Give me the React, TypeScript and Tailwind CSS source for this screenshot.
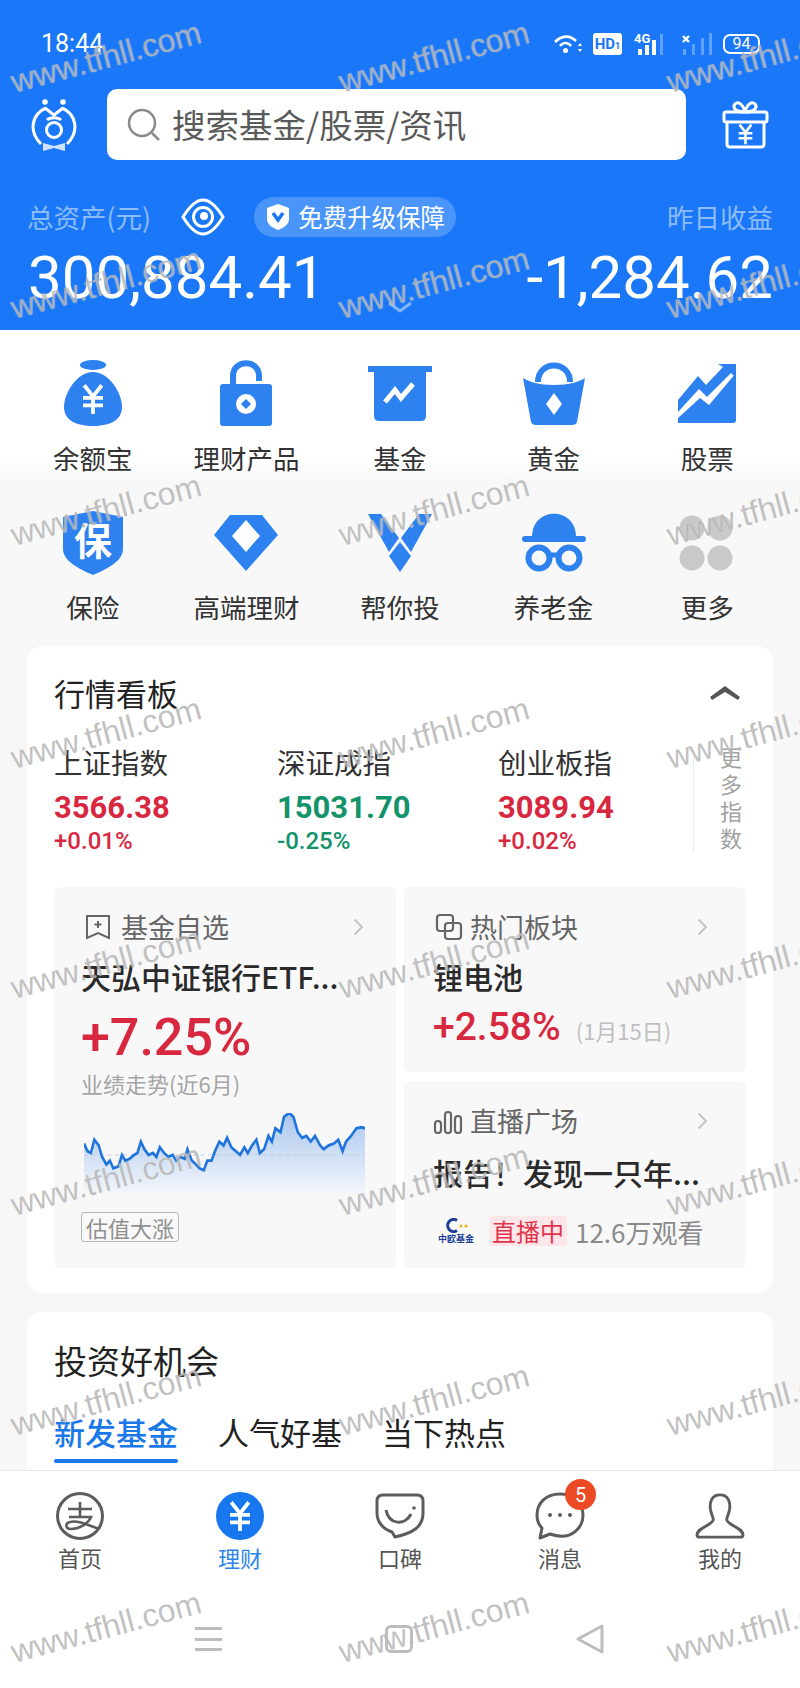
import type { ReactNode } from "react";

const CJK = "font-['Noto_Sans_CJK_SC','Noto_Sans',sans-serif]";
const NUM = "font-['Roboto','Noto_Sans_CJK_SC',sans-serif]";
const BLUE = "#2d82f0";

const Yen = ({ x, y, s = 1, color = "#fff" }: { x: number; y: number; s?: number; color?: string }) => (
  <g transform={`translate(${x} ${y}) scale(${s})`} stroke={color} strokeWidth="3" fill="none">
    <path d="M-7 -11 L0 -2 L7 -11 M-8 -1 H8 M-8 5 H8 M0 -2 V12" />
  </g>
);

const topIcons: { label: string; icon: ReactNode }[] = [
  {
    label: "余额宝",
    icon: (
      <svg width="64" height="70" viewBox="0 0 64 70">
        <ellipse cx="32" cy="6" rx="13" ry="5" fill={BLUE} />
        <path d="M32 13 C16 13 3 34 3 48 C3 61 15 67 32 67 C49 67 61 61 61 48 C61 34 48 13 32 13Z" fill={BLUE} />
        <Yen x={32} y={40} s={1.25} />
      </svg>
    ),
  },
  {
    label: "理财产品",
    icon: (
      <svg width="56" height="68" viewBox="0 0 56 68">
        <path d="M15 24 V16 C15 -1 41 -1 41 16 V21" fill="none" stroke={BLUE} strokeWidth="6" />
        <rect x="2" y="24" width="52" height="42" rx="3" fill={BLUE} />
        <circle cx="28" cy="44" r="10" fill="#fff" />
        <path d="M28 39 L33 44 L28 49 L23 44Z" fill={BLUE} />
      </svg>
    ),
  },
  {
    label: "基金",
    icon: (
      <svg width="64" height="56" viewBox="0 0 64 56">
        <rect x="0" y="0" width="64" height="6" fill={BLUE} />
        <path d="M6 4 H58 V50 Q58 55 53 55 H11 Q6 55 6 50Z" fill={BLUE} />
        <path d="M17 36 L27 24 L33 32 L45 18" fill="none" stroke="#fff" strokeWidth="5" />
      </svg>
    ),
  },
  {
    label: "黄金",
    icon: (
      <svg width="64" height="64" viewBox="0 0 64 64">
        <path d="M16 20 C16 -2 48 -2 48 20" fill="none" stroke={BLUE} strokeWidth="6" />
        <path d="M1 16 C8 20 16 23 32 23 C48 23 56 20 63 16 L55 60 Q54 63 50 63 H14 Q10 63 9 60Z" fill={BLUE} />
        <path d="M32 31 L40 42 L32 53 L24 42Z" fill="#fff" />
      </svg>
    ),
  },
  {
    label: "股票",
    icon: (
      <svg width="60" height="60" viewBox="0 0 60 60">
        <path d="M59 9 V56 Q59 59 56 59 H1 V54 L23 34 L32 41 Z" fill={BLUE} />
        <path d="M1 36 L21 12 L29 21 L46 3 L41 0 H59 V14 L54 9 L30 33 L22 25 L1 48Z" fill={BLUE} />
      </svg>
    ),
  },
  {
    label: "保险",
    icon: (
      <svg width="60" height="64" viewBox="0 0 60 64">
        <path d="M30 0 L60 6 V38 C60 50 44 58 30 64 C16 58 0 50 0 38 V6Z" fill={BLUE} />
        <text x="30" y="44" textAnchor="middle" fill="#fff" fontSize="38" fontWeight="700" fontFamily="Noto Sans CJK SC">保</text>
      </svg>
    ),
  },
  {
    label: "高端理财",
    icon: (
      <svg width="64" height="56" viewBox="0 0 64 56">
        <path d="M16 0 H48 L64 20 L32 56 L0 20Z" fill={BLUE} />
        <path d="M32 5 L46 21 L32 37 L18 21Z" fill="#fff" />
      </svg>
    ),
  },
  {
    label: "帮你投",
    icon: (
      <svg width="64" height="58" viewBox="0 0 64 58">
        <path d="M0 0 H13 L31 24 L21 38Z" fill={BLUE} />
        <path d="M64 0 H51 L33 24 L43 38Z" fill={BLUE} />
        <path d="M32 28 L43 42 L32 58 L21 42Z" fill={BLUE} />
      </svg>
    ),
  },
  {
    label: "养老金",
    icon: (
      <svg width="64" height="60" viewBox="0 0 64 60">
        <path d="M10 24 C10 -7 54 -7 54 24Z" fill={BLUE} />
        <rect x="0" y="23" width="64" height="6" rx="3" fill={BLUE} />
        <circle cx="17" cy="45" r="10.5" fill="none" stroke={BLUE} strokeWidth="6" />
        <circle cx="47" cy="45" r="10.5" fill="none" stroke={BLUE} strokeWidth="6" />
        <path d="M26 42 H38" stroke={BLUE} strokeWidth="5" />
      </svg>
    ),
  },
  {
    label: "更多",
    icon: (
      <svg width="56" height="56" viewBox="0 0 56 56" fill="#c9c9c9">
        <circle cx="13" cy="13" r="12.5" />
        <circle cx="41" cy="13" r="12.5" />
        <circle cx="13" cy="43" r="12.5" />
        <circle cx="41" cy="43" r="12.5" />
      </svg>
    ),
  },
];

const indexes = [
  { name: "上证指数", value: "3566.38", pct: "+0.01%", color: "text-[#d8283f]" },
  { name: "深证成指", value: "15031.70", pct: "-0.25%", color: "text-[#12936a]" },
  { name: "创业板指", value: "3089.94", pct: "+0.02%", color: "text-[#d8283f]" },
];

const chartPts =
  "0,32 4,40 8,42 12,28 17,34 21,46 26,54 30,50 34,58 40,56 44,44 48,50 53,48 58,44 62,42 66,30 70,38 75,44 80,42 84,46 88,36 93,42 98,46 103,44 107,50 112,46 117,48 120,38 125,50 130,54 134,58 139,60 143,50 148,50 152,40 157,30 162,34 166,26 171,36 176,40 181,44 186,36 190,42 195,34 200,28 204,42 209,38 214,24 218,30 222,16 228,20 232,4 238,0 243,4 248,20 253,26 258,24 263,30 268,24 274,34 278,38 284,34 290,32 295,28 300,40 304,30 310,24 316,16 322,15 326,16";

const watermarkRows = [57, 283, 510, 733, 963, 1180, 1400, 1627];
const watermarkCols = [106, 434, 762];

const Chevron = () => (
  <svg width="11" height="18" viewBox="0 0 11 18" fill="none" stroke="#c4c4c4" strokeWidth="2">
    <path d="M1.5 1.5 L9 9 L1.5 16.5" />
  </svg>
);

const navItems: { label: string; active?: boolean; icon: ReactNode }[] = [
  {
    label: "首页",
    icon: (
      <svg width="50" height="50" viewBox="0 0 50 50" fill="none" stroke="#5c5c5c" strokeWidth="3">
        <circle cx="25" cy="25" r="22.5" />
        <path d="M13 18 H37 M25 11 V27 M14 26 H36 C33 33 24 38 16 38 C10 38 10 32 15 31 C23 29 33 34 44 38" strokeWidth="2.6" />
      </svg>
    ),
  },
  {
    label: "理财",
    active: true,
    icon: (
      <svg width="48" height="48" viewBox="0 0 48 48">
        <circle cx="24" cy="24" r="24" fill="#1677ef" />
        <Yen x={24} y={24} s={1.25} />
      </svg>
    ),
  },
  {
    label: "口碑",
    icon: (
      <svg width="50" height="46" viewBox="0 0 50 46" fill="none" stroke="#5c5c5c" strokeWidth="3">
        <path d="M8 2 H42 Q48 2 48 8 V20 C48 34 38 40 20 44 L17 39 C8 36 2 29 2 20 V8 Q2 2 8 2Z" strokeLinejoin="round" />
        <path d="M11 17 C14 32 30 33 36 21" />
        <circle cx="39" cy="15" r="1.8" fill="#5c5c5c" stroke="none" />
      </svg>
    ),
  },
  {
    label: "消息",
    icon: (
      <svg width="50" height="48" viewBox="0 0 50 48" fill="none" stroke="#5c5c5c" strokeWidth="3">
        <path d="M25 2 C10 2 2 12 2 23 C2 29 4 33 7 36 L5 46 L15 42 C38 50 48 34 48 23 C48 12 40 2 25 2Z" strokeLinejoin="round" />
        <circle cx="15" cy="23" r="2" fill="#5c5c5c" stroke="none" />
        <circle cx="25" cy="23" r="2" fill="#5c5c5c" stroke="none" />
        <circle cx="35" cy="23" r="2" fill="#5c5c5c" stroke="none" />
      </svg>
    ),
  },
  {
    label: "我的",
    icon: (
      <svg width="52" height="46" viewBox="0 0 52 48" fill="none" stroke="#5c5c5c" strokeWidth="3">
        <path d="M26 2 C17 2 15 10 16 17 C17 23 19 25 19 28 C19 33 2 36 2 44 Q2 46 5 46 H47 Q50 46 50 44 C50 36 33 33 33 28 C33 25 35 23 36 17 C37 10 35 2 26 2Z" />
      </svg>
    ),
  },
];

export default function App() {
  return (
    <div className={`relative flex h-[1688px] w-[800px] flex-col overflow-hidden bg-[#f7f7f8] ${CJK}`}>
      {/* Header */}
      <header className="flex h-[330px] shrink-0 flex-col bg-[#1a78f8] text-white">
        <div className="flex h-[89px] items-center justify-between pb-[1px] pl-[41px] pr-[40px]">
          <span className={`text-[25px] ${NUM}`}>18:44</span>
          <div className="flex items-center">
            <svg width="29" height="20" viewBox="0 0 29 20" fill="none" stroke="#fff" strokeWidth="2.6">
              <path d="M1 8 C8 1 16 1 22 7 M6 12 C9 8 14 8 17 12" />
              <circle cx="11.5" cy="16.5" r="2.5" fill="#fff" stroke="none" />
              <path d="M26 9 L28 12 H24Z M26 18 L28 15 H24Z" fill="#fff" stroke="none" />
            </svg>
            <span className={`ml-[10px] flex h-[22px] w-[29px] items-baseline justify-center rounded-[3px] bg-white text-[15px] font-bold leading-[22px] text-[#1a78f8] ${NUM}`}>
              HD<span className="text-[9px]">1</span>
            </span>
            <svg width="32" height="24" viewBox="0 0 32 24" fill="#fff" className="ml-[12px]">
              <text x="0" y="11" fontSize="13" fontWeight="700" fontFamily="Roboto">4G</text>
              <rect x="4" y="17" width="4" height="6" />
              <rect x="11" y="13" width="4" height="10" />
              <rect x="18" y="8" width="4" height="15" />
              <rect x="26" y="2" width="3" height="21" opacity="0.3" />
            </svg>
            <svg width="31" height="24" viewBox="0 0 31 24" fill="#fff" className="ml-[16px]">
              <path d="M1 4 L7 10 M7 4 L1 10" stroke="#fff" strokeWidth="2.4" />
              <rect x="1" y="17" width="3" height="6" opacity="0.3" />
              <rect x="10" y="12" width="3" height="11" opacity="0.3" />
              <rect x="19" y="6" width="3" height="17" opacity="0.3" />
              <rect x="27" y="1" width="3" height="22" opacity="0.3" />
            </svg>
            <span className={`ml-[10px] flex h-[20px] w-[37px] items-center justify-center rounded-[7px] border-2 border-white text-[16px] leading-none ${NUM}`}>
              94
            </span>
          </div>
        </div>

        <div className="flex h-[71px] items-center pl-[30px] pr-[31px]">
          <svg width="48" height="56" viewBox="0 0 48 56" fill="none" stroke="#fff" strokeWidth="3" className="shrink-0">
            <path d="M11 47 C-2 34 2 17 16 11 M37 47 C50 34 46 17 32 11" />
            <path d="M15 11 L24 18 L33 11" />
            <circle cx="15" cy="5" r="2.8" fill="#fff" stroke="none" />
            <circle cx="33" cy="5" r="2.8" fill="#fff" stroke="none" />
            <path d="M17 23 C20 20 28 20 31 23" />
            <circle cx="24" cy="33" r="7.5" />
            <path d="M13 46 L24 49 L35 46 V54 L24 51 L13 54Z" fill="#cfe2fd" stroke="none" />
          </svg>
          <div className="ml-[29px] flex h-[71px] w-[579px] items-center rounded-[10px] bg-white pl-[20px]">
            <svg width="34" height="34" viewBox="0 0 34 34" fill="none" stroke="#8a8a8a" strokeWidth="2.5">
              <circle cx="15" cy="15" r="13" />
              <path d="M25 25 L32 32" />
            </svg>
            <span className="ml-[11px] text-[33.5px] text-[#5a5a5a]">搜索基金/股票/资讯</span>
          </div>
          <svg width="47" height="48" viewBox="0 0 47 48" fill="none" stroke="#fff" strokeWidth="3" className="ml-auto shrink-0">
            <rect x="2" y="11" width="43" height="10" rx="2" />
            <path d="M5 21 V43 Q5 46 8 46 H39 Q42 46 42 43 V21" />
            <path d="M23 11 C14 11 10 7 13 3 C16 0 21 3 23 11 C25 3 30 0 33 3 C36 7 32 11 23 11" />
            <Yen x={23.5} y={33} s={0.85} />
          </svg>
        </div>

        <div className="mt-[37px] flex h-[40px] items-center pl-[27px] pr-[27px]">
          <span className="text-[26.5px] text-[#8cbcfb]">总资产(元)</span>
          <svg width="44" height="38" viewBox="0 0 44 38" fill="none" stroke="#fff" strokeWidth="3" className="ml-[30px]">
            <path d="M2 19 C10 6 16 2 22 2 C28 2 34 6 42 19 C34 32 28 36 22 36 C16 36 10 32 2 19Z" />
            <circle cx="22" cy="19" r="9.5" />
            <circle cx="23" cy="18" r="4" fill="#fff" stroke="none" />
          </svg>
          <div className="ml-[29px] flex h-[40px] w-[202px] items-center rounded-full bg-[#4a95fa] pl-[12px]">
            <svg width="24" height="28" viewBox="0 0 24 28">
              <path d="M12 1 L23 5 V16 C23 22 17 25 12 27 C7 25 1 22 1 16 V5Z" fill="#fff" />
              <path d="M7 10 L12 17 L17 10" fill="none" stroke="#1a78f8" strokeWidth="3.5" />
            </svg>
            <span className="ml-[8px] text-[24.5px] leading-none">免费升级保障</span>
          </div>
          <span className="ml-auto text-[26.5px] text-[#8cbcfb]">昨日收益</span>
        </div>

        <div className={`relative mt-[10px] flex items-center justify-between pl-[28px] pr-[27px] text-[60px] leading-[62px] ${NUM}`}>
          <span>300,884.41</span>
          <span>-1,284.62</span>
          <svg width="26" height="12" viewBox="0 0 26 12" fill="none" stroke="#7fb5fb" strokeWidth="3" className="absolute left-[387px] top-[54px]">
            <path d="M2 2 L13 10 L24 2" />
          </svg>
        </div>
      </header>

      {/* Shortcut grid */}
      <section className="h-[316px] shrink-0 bg-[linear-gradient(#ffffff_0,#ffffff_130px,#f8f8f9_150px)]">
        <div className="grid grid-cols-5 grid-rows-[149px_149px] pl-[16px] pr-[16px] pt-[28px]">
          {topIcons.map((item) => (
            <div key={item.label} className="flex flex-col items-center">
              <div className="flex h-[72px] items-center justify-center">{item.icon}</div>
              <span className="mt-[10px] text-[26.5px] leading-[36px] text-[#333]">{item.label}</span>
            </div>
          ))}
        </div>
      </section>

      {/* 行情看板 */}
      <section className="mx-[27px] h-[647px] shrink-0 rounded-[16px] bg-white pl-[27px] pr-[27px]">
        <div className="flex h-[96px] items-center justify-between pb-[2px]">
          <h2 className="text-[31px] font-normal text-[#222]">行情看板</h2>
          <svg width="30" height="14" viewBox="0 0 30 14" className="mr-[6px]" fill="#555">
            <path d="M15 0 L30 11 L28 14 L15 6 L2 14 L0 11Z" />
          </svg>
        </div>
        <div className="flex h-[145px]">
          <div className="grid flex-1 grid-cols-[223px_221px_1fr]">
            {indexes.map((idx) => (
              <div key={idx.name}>
                <div className="mt-[-3px] text-[28.5px] leading-[46px] text-[#333]">{idx.name}</div>
                <div className={`mt-[3px] text-[31px] font-bold leading-[40px] ${NUM} ${idx.color}`}>{idx.value}</div>
                <div className={`mt-[-1px] text-[24px] font-medium leading-[28px] ${NUM} ${idx.color}`}>{idx.pct}</div>
              </div>
            ))}
          </div>
          <div className="mt-[15px] flex h-[95px] w-[53px] items-start justify-end border-l border-[#ececec] pr-[4px]">
            <div className="mt-[-14px] w-[22px] text-[22px] leading-[27px] text-[#a0a0a0]">更多指数</div>
          </div>
        </div>
        <div className="grid h-[381px] grid-cols-2 grid-rows-[185px_187px] gap-x-[8px] gap-y-[9px]">
          <div className="row-span-2 rounded-[6px] bg-[#f8f8f9] pl-[27px] pr-[32px] pt-[22px]">
            <div className="flex h-[36px] items-center">
              <svg width="26" height="26" viewBox="0 0 26 26" fill="none" stroke="#666" strokeWidth="2" className="ml-[4px]">
                <path d="M2 2 H24 V24 L13 19 L2 24Z" />
                <path d="M13 7 V14 M9.5 10.5 H16.5" />
              </svg>
              <span className="ml-[10px] text-[27px] text-[#666]">基金自选</span>
              <span className="ml-auto"><Chevron /></span>
            </div>
            <div className="mt-[9px] whitespace-nowrap text-[30px] font-medium leading-[44px] text-[#2a2a2a]">天弘中证银行ETF...</div>
            <div className={`mt-[10px] text-[52px] font-medium leading-[60px] text-[#d8283f] ${NUM}`}>+7.25%</div>
            <div className="mt-[-2px] text-[22px] leading-[34px] text-[#a5a5a5]">业绩走势(近6月)</div>
            <svg width="281" height="82" viewBox="0 0 326 86" preserveAspectRatio="none" className="ml-[3px] mt-[13px] block">
              <defs>
                <linearGradient id="area" x1="0" y1="0" x2="0" y2="1">
                  <stop offset="0" stopColor="#a9c6ee" />
                  <stop offset="1" stopColor="#f3f6fb" />
                </linearGradient>
              </defs>
              <polygon points={`0,84 ${chartPts} 326,84`} fill="url(#area)" />
              <path d="M0 44 H326" stroke="#c4cedb" strokeWidth="1" strokeDasharray="5 4" />
              <polyline points={chartPts} fill="none" stroke="#1f75dd" strokeWidth="3" />
            </svg>
            <span className="mt-[17px] inline-block rounded-[3px] border border-[#b5b5b5] px-[4px] text-[22px] leading-[28px] text-[#8f8f8f]">估值大涨</span>
          </div>

          <div className="rounded-[6px] bg-[#f8f8f9] pl-[29px] pr-[38px] pt-[22px]">
            <div className="flex h-[36px] items-center">
              <svg width="28" height="28" viewBox="0 0 28 28" fill="none" stroke="#666" strokeWidth="2.2" className="ml-[2px]">
                <rect x="2" y="2" width="16" height="16" rx="3" />
                <rect x="10" y="10" width="16" height="16" rx="3" />
              </svg>
              <span className="ml-[7px] text-[27px] text-[#666]">热门板块</span>
              <span className="ml-auto"><Chevron /></span>
            </div>
            <div className="mt-[9px] text-[30px] font-medium leading-[44px] text-[#2a2a2a]">锂电池</div>
            <div className="mt-[4px] flex items-baseline">
              <span className={`text-[39px] font-medium leading-[50px] text-[#d8283f] ${NUM}`}>+2.58%</span>
              <span className="ml-[15px] text-[22px] text-[#c0c0c0]">(1月15日)</span>
            </div>
          </div>

          <div className="rounded-[6px] bg-[#f8f8f9] pl-[29px] pr-[38px] pt-[22px]">
            <div className="flex h-[36px] items-center">
              <svg width="30" height="24" viewBox="0 0 30 24" fill="none" stroke="#666" strokeWidth="2.2" className="mt-[2px]">
                <rect x="2" y="11" width="6" height="12" rx="3" />
                <rect x="12" y="2" width="6" height="21" rx="3" />
                <rect x="22" y="6" width="6" height="17" rx="3" />
              </svg>
              <span className="ml-[7px] text-[27px] text-[#666]">直播广场</span>
              <span className="ml-auto"><Chevron /></span>
            </div>
            <div className="mt-[11px] whitespace-nowrap text-[30px] font-medium leading-[44px] text-[#2a2a2a]">报告！发现一只年...</div>
            <div className="mt-[21px] flex h-[32px] items-center">
              <div className="ml-[4px] flex w-[38px] flex-col items-center">
                <svg width="26" height="15" viewBox="0 0 26 15" fill="none">
                  <path d="M14 2.5 A6 6 0 1 0 14 12.5" stroke="#1b3f95" strokeWidth="3" />
                  <circle cx="18" cy="8" r="1.6" fill="#e8b21c" />
                  <circle cx="23" cy="8" r="1.6" fill="#e8b21c" />
                </svg>
                <span className="text-[9px] font-bold leading-[12px] text-[#1b3f95]">中欧基金</span>
              </div>
              <span className="ml-[14px] rounded-[3px] bg-[#fde6e9] px-[3px] text-[24px] leading-[30px] text-[#e0344b]">直播中</span>
              <span className="ml-[8px] whitespace-nowrap text-[26px] text-[#8a8a8a]">12.6万观看</span>
            </div>
          </div>
        </div>
      </section>

      {/* 投资好机会 */}
      <section className="mx-[27px] mt-[19px] min-h-0 flex-1 rounded-t-[16px] bg-white pl-[27px]">
        <h2 className="pt-[22px] text-[33px] font-normal leading-[52px] text-[#222]">投资好机会</h2>
        <div className="mt-[23px] flex gap-[40px] text-[31px] leading-[46px] text-[#222]">
          <span className="relative font-medium text-[#1a78e8]">
            新发基金
            <span className="absolute bottom-[-8px] left-0 h-[4px] w-full rounded-full bg-[#1a78e8]" />
          </span>
          <span>人气好基</span>
          <span>当下热点</span>
        </div>
      </section>

      {/* Tab bar */}
      <nav className="h-[218px] shrink-0 border-t border-[#e8e8e8] bg-white">
        <div className="grid grid-cols-5">
          {navItems.map((item) => (
            <div key={item.label} className="flex flex-col items-center pt-[21px]">
              <div className="relative flex h-[48px] items-center justify-center">
                {item.icon}
                {item.label === "消息" && (
                  <span className={`absolute left-[30px] top-[-13px] flex h-[31px] w-[31px] items-center justify-center rounded-full bg-[#ec4a24] text-[20px] text-white ${NUM}`}>
                    5
                  </span>
                )}
              </div>
              <span className={`text-[22px] leading-[34px] ${item.active ? "text-[#2c84e8]" : "text-[#555]"}`}>{item.label}</span>
            </div>
          ))}
        </div>
        <div className="mt-[50px] flex items-center justify-center gap-[163px] pr-[2px]">
          <div className="flex h-[24px] w-[27px] flex-col justify-between">
            <span className="h-[3px] bg-[#bdbdbd]" />
            <span className="h-[3px] bg-[#bdbdbd]" />
            <span className="h-[3px] bg-[#bdbdbd]" />
          </div>
          <div className="h-[28px] w-[28px] rounded-[6px] border-[3px] border-[#bdbdbd]" />
          <svg width="28" height="30" viewBox="0 0 28 30" fill="none" stroke="#bdbdbd" strokeWidth="3" strokeLinejoin="round">
            <path d="M26 2 V28 L2 15Z" />
          </svg>
        </div>
      </nav>

      {/* Watermark */}
      {watermarkRows.map((top) =>
        watermarkCols.map((left) => (
          <span
            key={`${top}-${left}`}
            className="pointer-events-none absolute -translate-x-1/2 -translate-y-1/2 -rotate-[15deg] whitespace-nowrap font-['Liberation_Sans',sans-serif] text-[32px] leading-none text-[#a6a6a6]/70 [text-shadow:0_0_1px_rgba(255,255,255,0.6)]"
            style={{ top, left }}
          >
            www.tfhll.com
          </span>
        )),
      )}
    </div>
  );
}
